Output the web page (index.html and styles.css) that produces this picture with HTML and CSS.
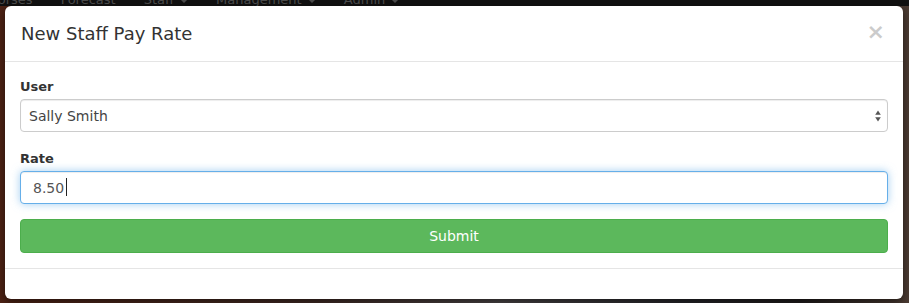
FILE: index.html
```html
<!DOCTYPE html>
<html lang="en">
<head>
    <meta charset="UTF-8">
    <title>New Staff Pay Rate</title>
    <link rel="stylesheet" href="styles.css">
</head>
<body>
    <!-- Navbar behind the backdrop -->
    <nav class="topnav">
        <div class="topnav-inner">
            <span class="nav-item nav-first">Horses</span>
            <span class="nav-item">Forecast</span>
            <span class="nav-item">Staff <span class="caret"></span></span>
            <span class="nav-item">Management <span class="caret"></span></span>
            <span class="nav-item">Admin <span class="caret"></span></span>
        </div>
    </nav>

    <!-- Modal -->
    <div class="modal">
        <div class="modal-header">
            <h4 class="modal-title">New Staff Pay Rate</h4>
            <button type="button" class="close">&times;</button>
        </div>

        <form class="modal-body">
            <div class="form-group">
                <label for="user">User</label>
                <div class="select-wrap">
                    <select id="user" class="form-control">
                        <option>Sally Smith</option>
                    </select>
                    <svg class="select-arrows" width="6" height="12" viewBox="0 0 6 12">
                        <path d="M3 0.5 L5.8 4.8 L0.2 4.8 Z" fill="#555"/>
                        <path d="M3 11.5 L5.8 7.2 L0.2 7.2 Z" fill="#555"/>
                    </svg>
                </div>
            </div>

            <div class="form-group last">
                <label for="rate">Rate</label>
                <div class="input-wrap">
                    <input id="rate" type="text" class="form-control focused" value="8.50">
                    <span class="fake-caret"></span>
                </div>
            </div>

            <button type="button" class="btn-submit">Submit</button>
        </form>

        <div class="modal-footer"></div>
    </div>
</body>
</html>
```

FILE: styles.css
```css
/* Page + backdrop */
body {
    margin: 0;
    height: 303px;
    overflow: hidden;
    font-family: "DejaVu Sans", Verdana, sans-serif;
    font-size: 14px;
    color: #333;
    background: linear-gradient(90deg, #4d2214 0%, #3f2a24 35%, #4a4546 55%, #26262a 75%, #201c1c 88%, #4b3b32 100%);
}

.topnav {
    height: 6px;
    overflow: hidden;
    background-color: #111;
}

.topnav-inner {
    display: flex;
    gap: 28px;
    margin-top: -10px;
    margin-left: -12px;
    font-size: 13px;
    line-height: 20px;
    color: #4a4a4a;
    white-space: nowrap;
}

.caret {
    display: inline-block;
    width: 0;
    height: 0;
    margin-left: 2px;
    vertical-align: middle;
    border-top: 4px solid #4a4a4a;
    border-left: 4px solid transparent;
    border-right: 4px solid transparent;
}

/* Modal */
.modal {
    margin: 0 6px 0 5px;
    background-color: #fff;
    border-radius: 6px;
    box-shadow: 0 3px 9px rgba(0, 0, 0, 0.5);
}

.modal-header {
    display: flex;
    justify-content: space-between;
    align-items: center;
    padding: 15px 18px 15px 16px;
    border-bottom: 1px solid #e5e5e5;
}

.modal-title {
    margin: 0;
    font-size: 18px;
    font-weight: normal;
    line-height: 25px;
    color: #333;
}

.close {
    padding: 0;
    margin-top: -4px;
    border: none;
    background: none;
    font-family: "DejaVu Sans", sans-serif;
    font-size: 22px;
    font-weight: bold;
    line-height: 1;
    color: #000;
    opacity: 0.2;
    cursor: pointer;
}

.modal-body {
    display: flex;
    flex-direction: column;
    padding: 15px;
}

.form-group {
    display: flex;
    flex-direction: column;
    margin-bottom: 17px;
}

.form-group.last {
    margin-bottom: 15px;
}

.form-group label {
    font-size: 13px;
    font-weight: bold;
    line-height: 20px;
    margin-bottom: 2px;
    color: #333;
}

.select-wrap,
.input-wrap {
    position: relative;
}

.form-control {
    box-sizing: border-box;
    width: 100%;
    height: 33px;
    margin: 0;
    font-family: "DejaVu Sans", Verdana, sans-serif;
    font-size: 14px;
    color: #555;
    background-color: #fff;
    border: 1px solid #ccc;
    border-radius: 4px;
    box-shadow: inset 0 1px 1px rgba(0, 0, 0, 0.075);
    outline: none;
}

select.form-control {
    appearance: none;
    -webkit-appearance: none;
    padding: 0 24px 0 8px;
    color: #444;
}

.select-arrows {
    position: absolute;
    right: 7px;
    top: 11px;
}

input.form-control {
    padding: 0 12px;
}

.form-control.focused {
    border-color: #66afe9;
    box-shadow: inset 0 1px 1px rgba(0, 0, 0, 0.075), 0 0 8px rgba(102, 175, 233, 0.6);
}

/* text cursor after the typed value */
.fake-caret {
    position: absolute;
    left: 46px;
    top: 7px;
    width: 1px;
    height: 18px;
    background-color: #222;
}

.btn-submit {
    height: 34px;
    font-family: "DejaVu Sans", Verdana, sans-serif;
    font-size: 14px;
    color: #fff;
    background-color: #5cb85c;
    border: 1px solid #4cae4c;
    border-radius: 4px;
    cursor: pointer;
}

.modal-footer {
    height: 30px;
    border-top: 1px solid #e5e5e5;
}
```
